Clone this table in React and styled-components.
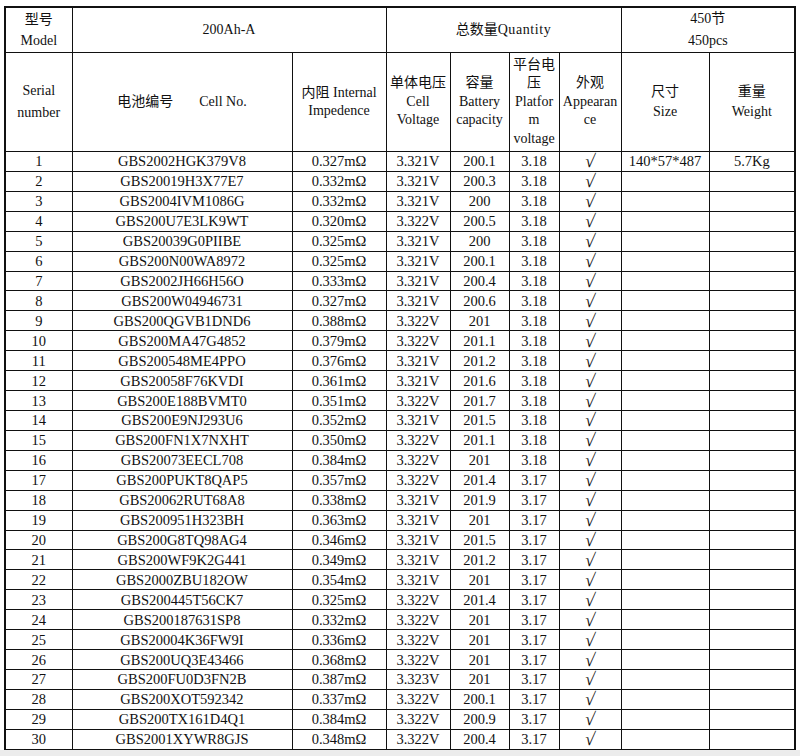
import React from 'react';
import styled, { createGlobalStyle } from 'styled-components';

const rows = [
  ['GBS2002HGK379V8', '0.327', '3.321', '200.1', '3.18'],
  ['GBS20019H3X77E7', '0.332', '3.321', '200.3', '3.18'],
  ['GBS2004IVM1086G', '0.332', '3.321', '200', '3.18'],
  ['GBS200U7E3LK9WT', '0.320', '3.322', '200.5', '3.18'],
  ['GBS20039G0PIIBE', '0.325', '3.321', '200', '3.18'],
  ['GBS200N00WA8972', '0.325', '3.321', '200.1', '3.18'],
  ['GBS2002JH66H56O', '0.333', '3.321', '200.4', '3.18'],
  ['GBS200W04946731', '0.327', '3.321', '200.6', '3.18'],
  ['GBS200QGVB1DND6', '0.388', '3.322', '201', '3.18'],
  ['GBS200MA47G4852', '0.379', '3.322', '201.1', '3.18'],
  ['GBS200548ME4PPO', '0.376', '3.321', '201.2', '3.18'],
  ['GBS20058F76KVDI', '0.361', '3.321', '201.6', '3.18'],
  ['GBS200E188BVMT0', '0.351', '3.322', '201.7', '3.18'],
  ['GBS200E9NJ293U6', '0.352', '3.321', '201.5', '3.18'],
  ['GBS200FN1X7NXHT', '0.350', '3.322', '201.1', '3.18'],
  ['GBS20073EECL708', '0.384', '3.322', '201', '3.18'],
  ['GBS200PUKT8QAP5', '0.357', '3.322', '201.4', '3.17'],
  ['GBS20062RUT68A8', '0.338', '3.321', '201.9', '3.17'],
  ['GBS200951H323BH', '0.363', '3.321', '201', '3.17'],
  ['GBS200G8TQ98AG4', '0.346', '3.321', '201.5', '3.17'],
  ['GBS200WF9K2G441', '0.349', '3.321', '201.2', '3.17'],
  ['GBS2000ZBU182OW', '0.354', '3.321', '201', '3.17'],
  ['GBS200445T56CK7', '0.325', '3.322', '201.4', '3.17'],
  ['GBS200187631SP8', '0.332', '3.322', '201', '3.17'],
  ['GBS20004K36FW9I', '0.336', '3.322', '201', '3.17'],
  ['GBS200UQ3E43466', '0.368', '3.322', '201', '3.17'],
  ['GBS200FU0D3FN2B', '0.387', '3.323', '201', '3.17'],
  ['GBS200XOT592342', '0.337', '3.322', '200.1', '3.17'],
  ['GBS200TX161D4Q1', '0.384', '3.322', '200.9', '3.17'],
  ['GBS2001XYWR8GJS', '0.348', '3.322', '200.4', '3.17'],
];

// column widths, measured from the scan
const widths = [67, 220, 94, 64, 59, 50, 62, 88, 86];

export default function App() {
  return (
    <>
      <GlobalStyle />
      <Page>
        <Sheet>
          <colgroup>
            {widths.map((w, i) => (
              <col key={i} style={{ width: w }} />
            ))}
          </colgroup>
          <thead>
            <TitleRow>
              <HeadCell $lh={21}>
                型号
                <br />
                Model
              </HeadCell>
              <HeadCell colSpan={2}>200Ah-A</HeadCell>
              <HeadCell colSpan={4}>
                总数量<Spaced>Quantity</Spaced>
              </HeadCell>
              <HeadCell colSpan={2} $lh={22}>
                450节
                <br />
                450pcs
              </HeadCell>
            </TitleRow>
            <LabelRow>
              <HeadCell $lh={22}>
                Serial
                <br />
                number
              </HeadCell>
              <HeadCell>
                <Gap>电池编号</Gap>Cell No.
              </HeadCell>
              <HeadCell>
                内阻 Internal
                <br />
                Impedence
              </HeadCell>
              <HeadCell>
                单体电压
                <br />
                Cell
                <br />
                Voltage
              </HeadCell>
              <HeadCell>
                容量
                <br />
                Battery
                <br />
                capacity
              </HeadCell>
              <HeadCell>
                平台电
                <br />
                压
                <br />
                Platfor
                <br />
                m
                <br />
                voltage
              </HeadCell>
              <HeadCell>
                外观
                <br />
                Appearan
                <br />
                ce
              </HeadCell>
              <HeadCell $lh={20}>
                尺寸
                <br />
                Size
              </HeadCell>
              <HeadCell $lh={20}>
                重量
                <br />
                Weight
              </HeadCell>
            </LabelRow>
          </thead>
          <tbody>
            {rows.map(([code, ohm, volt, cap, plat], i) => (
              <DataRow key={code}>
                <DataCell>{i + 1}</DataCell>
                <DataCell>{code}</DataCell>
                <DataCell>{ohm}mΩ</DataCell>
                <DataCell>{volt}V</DataCell>
                <DataCell>{cap}</DataCell>
                <DataCell>{plat}</DataCell>
                <DataCell>
                  <Check>√</Check>
                </DataCell>
                <DataCell>{i === 0 ? '140*57*487' : ''}</DataCell>
                <DataCell>{i === 0 ? '5.7Kg' : ''}</DataCell>
              </DataRow>
            ))}
            <DataRow>
              {widths.map((w, i) => (
                <DataCell key={i} />
              ))}
            </DataRow>
          </tbody>
        </Sheet>
      </Page>
    </>
  );
}

const GlobalStyle = createGlobalStyle`
  body {
    margin: 0;
    background: #ececec;
  }
`;

const Page = styled.div`
  width: 800px;
  height: 750px;
  overflow: hidden;
  background: #fff;
  padding: 6px 0 0 4px;
  box-sizing: border-box;
  font-family: "Liberation Serif", "Noto Sans CJK SC", serif;
  color: #111;
`;

const Sheet = styled.table`
  width: 790px;
  table-layout: fixed;
  border-collapse: collapse;
  border: 2px solid #111;
`;

const TitleRow = styled.tr`
  height: 45px;
`;

const LabelRow = styled.tr`
  height: 99px;
`;

const DataRow = styled.tr`
  height: 19.93px;
`;

const HeadCell = styled.th`
  border: 1.5px solid #111;
  padding: 0;
  font-weight: normal;
  font-size: 14px;
  line-height: ${p => (p.$lh ? p.$lh : 18.5)}px;
  text-align: center;
  vertical-align: middle;
`;

const DataCell = styled.td`
  border: 1.5px solid #111;
  padding: 0;
  font-size: 14.5px;
  line-height: 18px;
  text-align: center;
  vertical-align: middle;
  white-space: nowrap;
  overflow: hidden;
`;

const Gap = styled.span`
  margin-right: 26px;
`;

const Spaced = styled.span`
  letter-spacing: 0.6px;
`;

const Check = styled.span`
  display: inline-block;
  font-size: 18px;
  line-height: 16px;
  transform: translateY(1px) skewX(-8deg);
`;
